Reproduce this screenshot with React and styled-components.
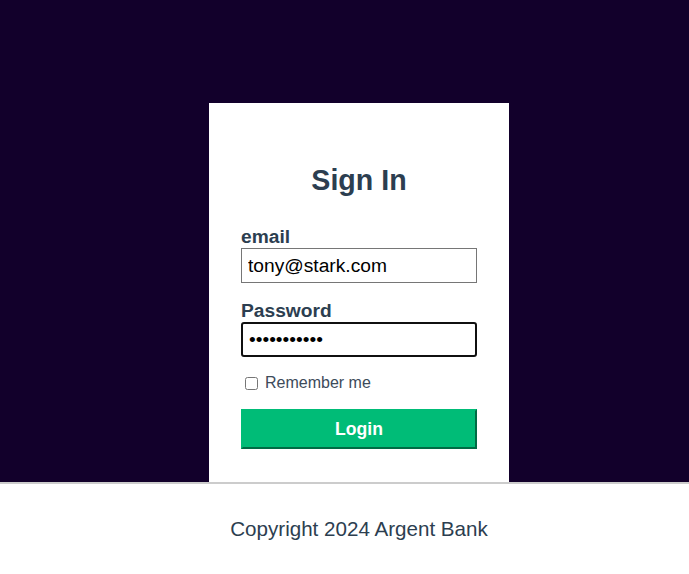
import React from 'react';
import styled, { createGlobalStyle } from 'styled-components';

const GlobalStyle = createGlobalStyle`
  html, body {
    margin: 0;
    padding: 0;
    background: #fff;
    overflow: hidden;
  }
  body {
    font-family: "Liberation Sans", Arial, Helvetica, sans-serif;
    color: #2c3e50;
  }
`;

const Page = styled.div`
  display: flex;
  flex-direction: column;
  min-height: 100vh;
  min-width: 718px;
`;

const Main = styled.main`
  background-color: #12002b;
  padding-top: 103px;
`;

const SignInContent = styled.section`
  box-sizing: border-box;
  background-color: #fff;
  width: 300px;
  margin: 0 auto;
  padding: 32px 32px 33px;
`;

const Title = styled.h1`
  font-size: 28.6px;
  line-height: 33px;
  font-weight: bold;
  text-align: center;
  margin: 29px 0 28px;
`;

const InputWrapper = styled.div`
  display: flex;
  flex-direction: column;
  text-align: left;
  margin-bottom: 16px;

  label {
    font-weight: bold;
    font-size: 19.2px;
    line-height: 23px;
  }
`;

const Input = styled.input`
  box-sizing: border-box;
  height: 35px;
  font-family: inherit;
  font-size: 19.2px;
  color: #000;
  padding: ${props => props.$active ? '4px 6px' : '5px 6px'};
  border: ${props => props.$active ? '2px solid #101010' : '1px solid #767676'};
  border-radius: ${props => props.$active ? '3px' : '0'};
  outline: none;
`;

const RememberRow = styled.div`
  display: flex;
  align-items: center;
  height: 20px;
  font-size: 16px;
  color: #3d4b5a;

  input {
    width: 13px;
    height: 13px;
    margin: 3px 3px 3px 4px;
  }

  label {
    margin-left: 4px;
  }
`;

const LoginButton = styled.button`
  display: block;
  width: 100%;
  box-sizing: border-box;
  height: 40px;
  margin-top: 16px;
  padding: 8px;
  font-family: inherit;
  font-size: 17.6px;
  font-weight: bold;
  color: #fff;
  background-color: #00bc77;
  border: 2px solid #00bc77;
  border-right-color: #006b44;
  border-bottom-color: #006b44;
  cursor: pointer;
`;

const Footer = styled.footer`
  display: flex;
  justify-content: center;
  border-top: 2px solid #ccc;
  padding: 33px 0 24px;
`;

const FooterText = styled.p`
  margin: 0;
  font-size: 20.6px;
  line-height: 24px;
`;

export default function App() {
  return (
    <Page>
      <GlobalStyle />
      <Main>
        <SignInContent>
          <Title>Sign In</Title>
          <form onSubmit={e => e.preventDefault()}>
            <InputWrapper>
              <label htmlFor="email">email</label>
              <Input id="email" type="text" defaultValue="tony@stark.com" />
            </InputWrapper>
            <InputWrapper>
              <label htmlFor="password">Password</label>
              <Input
                id="password"
                type="password"
                defaultValue="password123"
                $active
                autoFocus
              />
            </InputWrapper>
            <RememberRow>
              <input type="checkbox" id="remember-me" />
              <label htmlFor="remember-me">Remember me</label>
            </RememberRow>
            <LoginButton type="submit">Login</LoginButton>
          </form>
        </SignInContent>
      </Main>
      <Footer>
        <FooterText>Copyright 2024 Argent Bank</FooterText>
      </Footer>
    </Page>
  );
}
